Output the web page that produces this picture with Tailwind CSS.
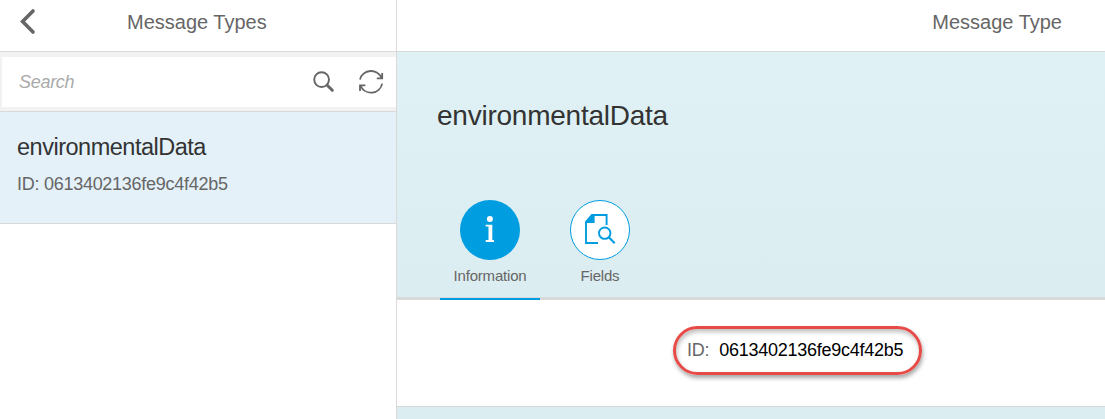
<!DOCTYPE html>
<html lang="en">
<head>
<meta charset="utf-8">
<title>Message Types</title>
<script src="https://cdn.jsdelivr.net/npm/@tailwindcss/browser@4"></script>
</head>
<body class="flex h-[419px] w-[1105px] overflow-hidden bg-white font-['Liberation_Sans',Arial,sans-serif] text-[#666]">
  <aside class="flex w-[397px] shrink-0 flex-col border-r border-[#d9d9d9]">
    <header class="flex h-[52px] shrink-0 items-center border-b border-[#d9d9d9] pb-[7px]">
      <svg class="ml-[18px] h-[28px] w-[20px] shrink-0" viewBox="0 0 20 28" fill="none" stroke="#666" stroke-width="3.6" stroke-linecap="round" stroke-linejoin="miter"><path d="M15 3 4.6 13.5 15 24"/></svg>
      <h1 class="ml-[89px] text-[20px] leading-6 whitespace-nowrap">Message Types</h1>
    </header>
    <div class="h-[60px] shrink-0 border-b border-[#d9d9d9] bg-[#f2f2f2] pt-[5px] pl-[2px]">
      <div class="flex h-[50px] items-center bg-white pl-[17px]">
        <span class="w-[289px] text-[18px] tracking-[-0.3px] text-[#aaa] italic">Search</span>
        <svg class="ml-[4px] h-[24px] w-[24px]" viewBox="0 0 24 24" fill="none" stroke="#666"><circle cx="9.6" cy="9.6" r="7.4" stroke-width="1.9"/><path d="m15.2 15.2 5.1 5.1" stroke-width="3" stroke-linecap="round"/></svg>
        <svg class="ml-[22px] h-[26px] w-[26px]" viewBox="0 0 26 26" fill="none" stroke="#666" stroke-width="1.8"><path d="M2 10.4A11.4 11.4 0 0 1 23.6 9.2M24.2 4V9.4H18.8M24.2 14.6A11.4 11.4 0 0 1 2.6 16.8M2 22V16.3H7.4"/></svg>
      </div>
    </div>
    <section class="h-[112px] shrink-0 border-b border-[#d9d9d9] bg-[#e4f1f9] pt-[21px] pl-[17px]">
      <h2 class="text-[23.5px] leading-7 tracking-[-0.49px] text-[#333]">environmentalData</h2>
      <p class="mt-[12px] text-[18px] leading-[22px] tracking-[-0.27px]">ID: 0613402136fe9c4f42b5</p>
    </section>
  </aside>
  <main class="flex flex-1 flex-col">
    <header class="flex h-[52px] shrink-0 items-center justify-end border-b border-[#d9d9d9] pr-[43px] pb-[7px]">
      <h1 class="text-[20px] leading-6">Message Type</h1>
    </header>
    <section class="flex h-[248px] shrink-0 flex-col border-b-3 border-[#d9d9d9] bg-linear-to-b from-[#dff1f4] to-[#dbedf0]">
      <h2 class="mt-[48px] ml-[40px] text-[28px] leading-8 tracking-[-0.24px] text-[#333]">environmentalData</h2>
      <nav class="mt-[68px] -mb-[3px] ml-[43px] flex gap-[10px] text-[15px] leading-[18px] tracking-[-0.2px]">
        <div class="flex h-[100px] w-[100px] flex-col items-center border-b-2 border-[#009de0]">
          <span class="flex h-[60px] w-[60px] items-center justify-center rounded-full bg-[#009de0]">
            <svg class="h-[30px] w-[30px]" viewBox="0 0 30 30" fill="#fff"><circle cx="14.9" cy="3.9" r="3"/><path d="M10.7 9.8h6.6v15.3H19V27h-8.3v-1.9h2.8V11.5h-2.8z"/></svg>
          </span>
          <span class="mt-[7px]">Information</span>
        </div>
        <div class="flex h-[100px] w-[100px] flex-col items-center">
          <span class="flex h-[60px] w-[60px] items-center justify-center rounded-full border border-[#009de0] bg-white">
            <svg class="h-[32px] w-[32px]" viewBox="0 0 32 32" fill="none" stroke="#009de0" stroke-width="1.9"><path d="M14 29H2V8.5L8.5 1H22.6V11"/><path d="M1.1 9V7.4L7.5.1H10.6V9z" fill="#009de0" stroke="none"/><circle cx="20.7" cy="19.2" r="5.7"/><path d="m24.8 23.3 5.9 5.9" stroke-width="2.2"/></svg>
          </span>
          <span class="mt-[7px]">Fields</span>
        </div>
      </nav>
    </section>
    <section class="flex h-[107px] shrink-0 items-start border-b border-[#d9d9d9] pt-[26px] pl-[276px]">
      <p class="flex h-[49px] w-[249px] items-center gap-[10px] rounded-[25px] border-3 border-[#e64b47] pl-[11px] text-[18px] tracking-[-0.26px] whitespace-nowrap shadow-[1px_3px_4px_rgba(0,0,0,.35),inset_1px_3px_4px_rgba(0,0,0,.25)]"><span>ID:</span><span class="text-black">0613402136fe9c4f42b5</span></p>
    </section>
    <div class="flex-1 bg-[#dbedf0]"></div>
  </main>
</body>
</html>
